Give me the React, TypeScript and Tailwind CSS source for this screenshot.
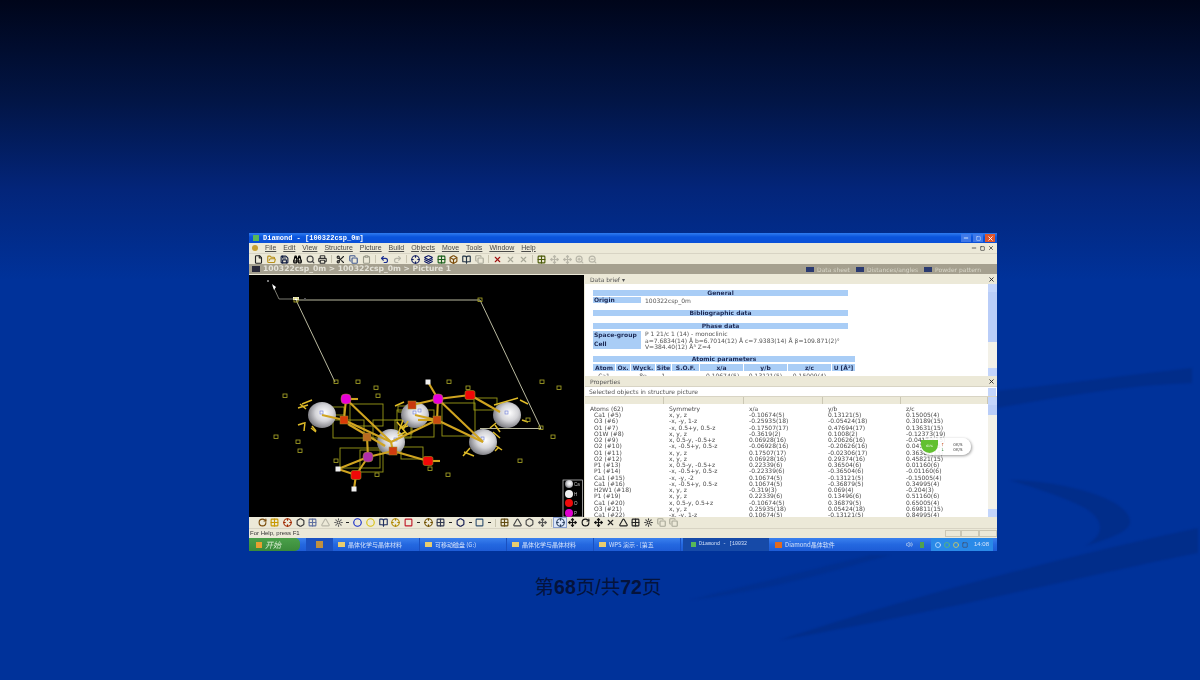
import {
  Binoculars, BookOpen, Box, Circle, Clipboard, Copy, Crosshair, File, FolderOpen, Grid2x2, Hexagon, Layers,
  Minus, Move, Printer, Redo2, RotateCw, Save, Scissors, Search, Square, Sun, Triangle, Undo2, Volume2, X, ZoomIn, ZoomOut,
} from 'lucide-react';

const rows = [
  ['Ca1 (#5)', 'x, y, z', '-0.10674(5)', '0.13121(5)', '0.15005(4)'],
  ['O3 (#6)', '-x, -y, 1-z', '-0.25935(18)', '-0.05424(18)', '0.30189(15)'],
  ['O1 (#7)', '-x, 0.5+y, 0.5-z', '-0.17507(17)', '0.47694(17)', '0.13631(15)'],
  ['O1W (#8)', 'x, y, z', '-0.3619(2)', '0.1008(2)', '-0.12373(19)'],
  ['O2 (#9)', 'x, 0.5-y, -0.5+z', '0.06928(16)', '0.20626(16)', '-0.04179(15)'],
  ['O2 (#10)', '-x, -0.5+y, 0.5-z', '-0.06928(16)', '-0.20626(16)', '0.04179(15)'],
  ['O1 (#11)', 'x, y, z', '0.17507(17)', '-0.02306(17)', '0.36369(15)'],
  ['O2 (#12)', 'x, y, z', '0.06928(16)', '0.29374(16)', '0.45821(15)'],
  ['P1 (#13)', 'x, 0.5-y, -0.5+z', '0.22339(6)', '0.36504(6)', '0.01160(6)'],
  ['P1 (#14)', '-x, -0.5+y, 0.5-z', '-0.22339(6)', '-0.36504(6)', '-0.01160(6)'],
  ['Ca1 (#15)', '-x, -y, -2', '0.10674(5)', '-0.13121(5)', '-0.15005(4)'],
  ['Ca1 (#16)', '-x, -0.5+y, 0.5-z', '0.10674(5)', '-0.36879(5)', '0.34995(4)'],
  ['H2W1 (#18)', 'x, y, z', '-0.319(3)', '0.069(4)', '-0.204(3)'],
  ['P1 (#19)', 'x, y, z', '0.22339(6)', '0.13496(6)', '0.51160(6)'],
  ['Ca1 (#20)', 'x, 0.5-y, 0.5+z', '-0.10674(5)', '0.36879(5)', '0.65005(4)'],
  ['O3 (#21)', 'x, y, z', '0.25935(18)', '0.05424(18)', '0.69811(15)'],
  ['Ca1 (#22)', '-x, -y, 1-z', '0.10674(5)', '-0.13121(5)', '0.84995(4)'],
];

const menus = ['File', 'Edit', 'View', 'Structure', 'Picture', 'Build', 'Objects', 'Move', 'Tools', 'Window', 'Help'];

const topTools = [
  [File, '#222222'], [FolderOpen, '#b89018'], [Save, '#101c40'], [Binoculars, '#000000'], [Search, '#444444'], [Printer, '#333333'], null,
  [Scissors, '#222222'], [Copy, '#40588e'], [Clipboard, '#9a9a8a'], null,
  [Undo2, '#1a2f90'], [Redo2, '#b8b6a8'], null,
  [Crosshair, '#101c60'], [Layers, '#000e60'], [Grid2x2, '#1a5e1a'], [Box, '#7a4a08'], [BookOpen, '#223344'], [Copy, '#a8a898'], null,
  [X, '#a01010'], [X, '#a8a898'], [X, '#a8a898'], null,
  [Grid2x2, '#4a5a08'], [Move, '#b8b6a8'], [Move, '#b8b6a8'], [ZoomIn, '#b8b6a8'], [ZoomOut, '#b8b6a8'],
] as const;

const bottomTools = [
  [RotateCw, '#7a4a08'], [Grid2x2, '#c89800'], [Crosshair, '#a02800'], [Hexagon, '#333333'], [Grid2x2, '#6070a0'], [Triangle, '#b8b6a8'], [Sun, '#555555'], 'dash',
  [Circle, '#1028c8'], [Circle, '#d8c010'], [BookOpen, '#203060'], [Crosshair, '#b08800'], [Square, '#c01828'], 'dash',
  [Crosshair, '#705000'], [Grid2x2, '#303850'], 'dash', [Hexagon, '#101850'], 'dash', [Square, '#305070'], 'dash', null,
  [Grid2x2, '#604a10'], [Triangle, '#444444'], [Hexagon, '#444444'], [Move, '#555555'], null,
  [Crosshair, '#2a4060', true], [Move, '#111111'], [RotateCw, '#111111'], [Move, '#111111'], [X, '#222222'], [Triangle, '#222222'], [Grid2x2, '#222222'], [Sun, '#333333'], [Copy, '#a8a898'], [Copy, '#a8a898'],
] as const;

const tasks = ['晶体化学与晶体材料', '可移动磁盘 (G:)', '晶体化学与晶体材料', 'WPS 演示 - [第五'];

const pale = 'font-["DejaVu_Sans","Noto_Sans_CJK_SC",sans-serif]';

const Tools = ({ items, narrow }: { items: readonly any[]; narrow?: boolean }) => (
  <div className="flex items-center">
    {items.map((item, i) => {
      if (item === null) return <div key={i} className="mx-[2px] h-[8px] w-px bg-[#c8c4b0]" />;
      if (item === 'dash') return <div key={i} className="mx-[2px] h-px w-[3px] bg-[#222222]" />;
      const [Icon, color, selected] = item;
      return (
        <div key={i} className={`flex ${narrow ? 'w-[12.65px]' : 'w-[12.9px]'} justify-center ${selected ? 'bg-[#dbe6f8] outline outline-[0.5px] outline-[#8aa0d0]' : ''}`}>
          <Icon size={9} color={color} strokeWidth={3} />
        </div>
      );
    })}
  </div>
);

const PaneHeader = ({ title, arrow }: { title: string; arrow?: boolean }) => (
  <div className="flex h-[9px] items-center justify-between bg-[#ece9d8] pl-[5px] pr-[2px] text-[6px] text-[#555555]">
    <span>{title}{arrow ? '  ▾' : ''}</span>
    <X size={7} color="#222222" strokeWidth={3} />
  </div>
);

const Scrollbar = ({ thumb }: { thumb: string }) => (
  <div className="flex w-[9px] shrink-0 flex-col bg-[#f3f1e8]">
    <div className="h-[8px] bg-[#c3d5fb]" />
    <div className={`${thumb} bg-[#b9cdf8]`} />
    <div className="flex-1" />
    <div className="h-[8px] bg-[#c3d5fb]" />
  </div>
);

const Bar = ({ children, wide }: { children: string; wide?: boolean }) => (
  <div className={`${wide ? 'w-[262px]' : 'w-[255px]'} h-[6px] bg-[#a9cdf6] text-center text-[6px] font-bold leading-[6px] text-[#1d2a55]`}>
    {children}
  </div>
);

const Crystal = () => {
  const spheres = [[322, 415], [415, 415], [507, 415], [391, 442], [483, 442]];
  const magenta = [[346, 399, '#e800d8'], [438, 399, '#e800d8'], [368, 457, '#b030a8']] as const;
  const red = [[470, 395], [428, 461], [356, 475]];
  const dimRed = [[344, 420, '#d83c08'], [437, 420, '#c84c10'], [367, 437, '#b86a20'], [393, 451, '#d03c10'], [412, 405, '#c83810']] as const;
  const white = [[428, 382], [338, 469], [354, 489]];
  const small = [[285, 396], [336, 382], [358, 382], [376, 388], [378, 396], [449, 382], [468, 388], [542, 382], [559, 388], [276, 437], [298, 442], [300, 451], [336, 461], [377, 475], [430, 469], [448, 475], [520, 461], [553, 437], [541, 428], [528, 420], [480, 300]];
  const frames = [[350, 404, 33, 22], [333, 420, 31, 18], [373, 420, 38, 18], [397, 410, 37, 27], [442, 403, 33, 33], [474, 398, 23, 12], [340, 448, 40, 20], [360, 450, 23, 22], [401, 447, 22, 12], [395, 420, 17, 14], [332, 407, 12, 8], [398, 406, 24, 6]];
  const bonds = [
    [346, 399, 391, 442], [344, 420, 391, 442], [348, 424, 385, 446], [322, 415, 344, 420], [346, 399, 344, 420], [391, 442, 437, 420],
    [438, 399, 437, 420], [415, 415, 437, 420], [438, 399, 483, 442], [437, 420, 483, 442], [438, 399, 470, 395], [470, 395, 500, 412],
    [391, 442, 393, 451], [393, 451, 428, 461], [368, 457, 393, 451], [368, 457, 338, 469], [338, 469, 356, 475], [356, 475, 368, 457],
    [356, 475, 354, 489], [428, 382, 438, 399], [367, 437, 368, 457], [412, 405, 438, 399], [428, 461, 440, 461], [346, 399, 358, 399], [418, 420, 437, 420],
  ];
  const ticks = [
    [308, 405, 298, 408], [306, 409, 300, 404], [312, 400, 302, 404], [305, 422, 304, 431], [311, 428, 316, 432], [316, 431, 312, 426], [304, 423, 298, 425],
    [395, 406, 404, 402], [406, 424, 400, 428], [494, 405, 518, 398], [520, 400, 528, 404], [522, 420, 528, 422], [495, 425, 500, 432], [496, 423, 490, 428],
    [470, 448, 463, 456], [464, 452, 474, 456], [496, 446, 502, 450], [493, 432, 500, 438], [499, 447, 495, 451],
    [400, 428, 408, 426], [405, 432, 398, 436], [408, 421, 403, 430], [397, 422, 407, 434], [403, 420, 398, 434],
  ];
  const marks = [[320, 411], [413, 411], [418, 409], [505, 411], [394, 438], [481, 437]];
  return (
    <svg viewBox="249 275 335 242" className="h-[242px] w-[335px] shrink-0 bg-black">
      <defs>
        <radialGradient id="ball" cx="0.58" cy="0.42" r="0.7">
          <stop offset="0" stopColor="#ffffff" />
          <stop offset="0.45" stopColor="#d4d4d8" />
          <stop offset="1" stopColor="#5c5c62" />
        </radialGradient>
      </defs>
      <path d="M296 300H480L541 428.5H480M296 300L335 382" fill="none" stroke="#e8e8c8" strokeWidth="0.8" />
      <path d="M273 286L279 299H296" fill="none" stroke="#b0b0a0" strokeWidth="0.7" />
      <path d="M272 284L276 287L274 290Z" fill="#ffffff" />
      <rect x="267" y="280" width="2" height="2" fill="#777777" />
      <rect x="293" y="297" width="6" height="3" fill="#ffffff" />
      <rect x="294" y="298" width="4" height="4" fill="none" stroke="#c0b830" strokeWidth="0.8" />
      <rect x="304" y="298" width="2" height="2" fill="#555555" />
      {frames.map(([x, y, w, h], i) => (
        <rect key={i} x={x} y={y} width={w} height={h} fill="none" stroke="#9a9a18" strokeWidth="0.9" />
      ))}
      {spheres.map(([x, y], i) => <ellipse key={i} cx={x} cy={y} rx={14} ry={13} fill="url(#ball)" />)}
      {marks.map(([x, y], i) => (
        <rect key={i} x={x} y={y} width={3} height={3} fill="none" stroke="#6878d8" strokeWidth="0.6" />
      ))}
      {bonds.map(([a, b, c, d], i) => (
        <line key={i} x1={a} y1={b} x2={c} y2={d} stroke="#d0a420" strokeWidth="2.1" />
      ))}
      {ticks.map(([a, b, c, d], i) => (
        <line key={i} x1={a} y1={b} x2={c} y2={d} stroke="#e0bc28" strokeWidth="1.5" />
      ))}
      {small.map(([x, y], i) => (
        <rect key={i} x={x - 2} y={y - 2} width={4} height={3.5} fill="none" stroke="#b0ac28" strokeWidth="0.8" />
      ))}
      {dimRed.map(([x, y, c], i) => <rect key={i} x={x - 4} y={y - 4} width={8} height={8} fill={c} stroke="#a09020" strokeWidth="0.5" />)}
      {magenta.map(([x, y, c], i) => <rect key={i} x={x - 5} y={y - 5} width={10} height={10} rx={4} fill={c} stroke="#a09020" strokeWidth="0.5" />)}
      {red.map(([x, y], i) => <rect key={i} x={x - 5} y={y - 4.5} width={10} height={9} rx={2} fill="#f00808" stroke="#a09020" strokeWidth="0.6" />)}
      {white.map(([x, y], i) => <rect key={i} x={x - 2.5} y={y - 2.5} width={5} height={5} fill="#f0f0f0" />)}
      <rect x="563" y="480" width="19.5" height="37" fill="#000000" stroke="#d8d8d8" strokeWidth="0.7" />
      <circle cx="569" cy="484" r="4" fill="url(#ball)" />
      <circle cx="569" cy="494" r="4" fill="#f0f0f0" />
      <circle cx="569" cy="503" r="4" fill="#ee0a0a" />
      <circle cx="569" cy="513" r="4" fill="#e000d0" />
      <text x="574" y="486" fontSize="4.5" fill="#c0c0c0" fontFamily="Liberation Sans">Ca</text>
      <text x="574" y="496" fontSize="4.5" fill="#c0c0c0" fontFamily="Liberation Sans">H</text>
      <text x="574" y="505" fontSize="4.5" fill="#c0c0c0" fontFamily="Liberation Sans">O</text>
      <text x="574" y="515" fontSize="4.5" fill="#c0c0c0" fontFamily="Liberation Sans">P</text>
    </svg>
  );
};

const DataBrief = () => (
  <div className="flex h-[92px] bg-white">
    <div className="flex-1 overflow-hidden pl-[8px] pt-[6px] text-[#555555]">
      <Bar>General</Bar>
      <div className="mt-[1px] flex h-[6px] items-center text-[6px]">
        <div className="h-full w-[48px] bg-[#a9cdf6] pl-[1px] font-bold leading-[6px] text-[#1d2a55]">Origin</div>
        <span className="ml-[4px]">100322csp_0m</span>
      </div>
      <div className="mt-[7px]"><Bar>Bibliographic data</Bar></div>
      <div className="mt-[7px]"><Bar>Phase data</Bar></div>
      <div className="mt-[2px] flex h-[18px] text-[6px] leading-[6.5px]">
        <div className="w-[48px] bg-[#a9cdf6] pl-[1px] pt-[1px] font-bold text-[#1d2a55]">
          <div>Space-group</div>
          <div className="mt-[2px]">Cell</div>
        </div>
        <div className="ml-[4px] whitespace-nowrap">
          P 1 21/c 1 (14) - monoclinic<br />
          a=7.6834(14) Å b=6.7014(12) Å c=7.9383(14) Å β=109.871(2)°<br />
          V=384.40(12) Å³ Z=4
        </div>
      </div>
      <div className="mt-[7px]"><Bar wide>Atomic parameters</Bar></div>
      <div className="mt-[2px] grid w-[262px] grid-cols-[22px_14px_24px_15px_27px_43px_43px_43px_23px] gap-x-px text-[6px] font-bold leading-[7px] text-[#1d2a55]">
        {['Atom', 'Ox.', 'Wyck.', 'Site', 'S.O.F.', 'x/a', 'y/b', 'z/c', 'U [Å²]'].map((h) => (
          <div key={h} className="overflow-hidden whitespace-nowrap bg-[#a9cdf6] text-center">{h}</div>
        ))}
      </div>
      <div className="mt-[2px] grid w-[262px] grid-cols-[22px_14px_24px_15px_27px_43px_43px_43px_23px] gap-x-px text-[6px] leading-[6px]">
        {['Ca1', '', '8e', '1', '', '-0.10674(5)', '0.13121(5)', '0.15009(4)', ''].map((c, i) => (
          <div key={i} className="whitespace-nowrap text-center">{c}</div>
        ))}
      </div>
    </div>
    <Scrollbar thumb="h-[50px]" />
  </div>
);

const Properties = () => (
  <>
    <PaneHeader title="Properties" />
    <div className="flex h-[11px] items-center justify-between border-y border-[#d8d4c4] bg-white pl-[4px] pr-[1px] text-[6px] text-[#555555]">
      Selected objects in structure picture
      <div className="h-[8px] w-[8px] bg-[#c3d5fb]" />
    </div>
    <div className="flex h-[120px]">
      <div className="relative flex-1 overflow-hidden bg-white">
        <div className="grid h-[7px] grid-cols-[79px_80px_79px_78px_1fr] bg-[#ece9d8]">
          {[0, 1, 2, 3, 4].map((i) => <div key={i} className="border-r border-[#cbc7b4]" />)}
        </div>
        <div className={`px-[5px] pt-[2px] text-[6px] leading-[6.24px] text-[#4a4a4a] ${pale}`}>
          <div className="grid grid-cols-[79px_80px_79px_78px_1fr]">
            {['Atoms (62)', 'Symmetry', 'x/a', 'y/b', 'z/c'].map((h) => <div key={h}>{h}</div>)}
          </div>
          {rows.map((r) => (
            <div key={r[0]} className="grid grid-cols-[79px_80px_79px_78px_1fr] whitespace-nowrap">
              {r.map((c, i) => <div key={i} className={i === 0 ? 'pl-[4px]' : ''}>{c}</div>)}
            </div>
          ))}
        </div>
        {/* net speed widget floating over the table */}
        <div className="absolute left-[336px] top-[41px] flex h-[17px] w-[50px] items-center rounded-full bg-white/90 shadow-[1px_1px_3px_#00000066]">
          <div className="flex h-[13px] w-[17px] items-center justify-center rounded-b-full bg-[#62c030] text-[3px] text-white">61%</div>
          <div className="ml-[3px] flex flex-col text-[4px] leading-[5px]">
            <span className="text-[#c04010]">↑</span>
            <span className="text-[#208030]">↓</span>
          </div>
          <div className="ml-[9px] flex flex-col text-[4px] leading-[5px] text-[#444444]">
            <span>0K/S</span>
            <span>0K/S</span>
          </div>
        </div>
      </div>
      <Scrollbar thumb="h-[10px]" />
    </div>
  </>
);

const Window = () => (
  <div className={`flex h-[318px] w-[748px] flex-col bg-[#ece9d8] blur-[0.35px] ${pale}`}>
    <div className="flex h-[10px] items-center justify-between bg-[linear-gradient(#2f7cf0,#0a54dc_40%,#0a50d8)] pl-[4px] pr-[2px]">
      <div className="flex items-center gap-[4px]">
        <span className="h-[6px] w-[6px] bg-[#58b858]" />
        <span className='font-["Liberation_Mono",monospace] text-[7px] font-bold leading-[10px] text-white'>Diamond - [100322csp_0m]</span>
      </div>
      <div className="flex items-center gap-[2px]">
        <div className="flex h-[8px] w-[10px] items-end justify-center bg-[#3f78e8] pb-[1px]"><Minus size={6} color="#ffffff" strokeWidth={3} /></div>
        <div className="flex h-[8px] w-[10px] items-center justify-center bg-[#3f78e8]"><Square size={5} color="#ffffff" strokeWidth={2} /></div>
        <div className="flex h-[8px] w-[10px] items-center justify-center bg-[#e0562c]"><X size={7} color="#ffffff" strokeWidth={3} /></div>
      </div>
    </div>
    <div className="flex h-[10px] items-center justify-between pl-[3px] pr-[3px] font-['Liberation_Sans',sans-serif] text-[7px] text-[#4a4a48]">
      <div className="flex items-center gap-[7px]">
        <span className="h-[6px] w-[6px] rounded-sm bg-[#c8a030]" />
        {menus.map((m) => <span key={m} className="underline decoration-[0.5px]">{m}</span>)}
      </div>
      <div className="flex items-center gap-[3px] text-[#333333]">
        <Minus size={6} strokeWidth={3} />
        <Square size={5} strokeWidth={3} />
        <X size={6} strokeWidth={3} />
      </div>
    </div>
    <div className="flex h-[11px] items-center border-t border-[#d8d4c4] pl-[3px]">
      <Tools items={topTools} />
    </div>
    <div className="flex h-[10px] items-center justify-between bg-[#a5a08f] pl-[3px] pr-[16px] text-[7.6px] font-bold text-[#e4e2d8]">
      <div className="flex items-center gap-[3px]">
        <span className="h-[6px] w-[8px] bg-[#2a2a3a]" />
        100322csp_0m &gt; 100322csp_0m &gt; Picture 1
      </div>
      <div className="flex items-center gap-[6px] text-[6px] font-normal text-[#d8d6c8]">
        <span className="flex items-center gap-[3px]"><span className="h-[5px] w-[8px] bg-[#2a3a70]" />Data sheet</span>
        <span className="flex items-center gap-[3px]"><span className="h-[5px] w-[8px] bg-[#2a3a70]" />Distances/angles</span>
        <span className="flex items-center gap-[3px]"><span className="h-[5px] w-[8px] bg-[#2a3a70]" />Powder pattern</span>
      </div>
    </div>
    <div className="mt-px flex h-[242px] overflow-hidden">
      <Crystal />
      <div className="ml-[1px] flex w-[412px] flex-col overflow-hidden">
        <PaneHeader title="Data brief" arrow />
        <DataBrief />
        <div className="h-px" />
        <Properties />
      </div>
    </div>
    <div className="flex h-[11px] items-center pl-[7px]">
      <Tools items={bottomTools} narrow />
    </div>
    <div className="flex h-[10px] items-center justify-between border-t border-[#d8d4c4] pl-[1px] font-['Liberation_Sans',sans-serif] text-[6px] text-[#333333]">
      For Help, press F1
      <div className="flex h-[7px]">
        <div className="w-[16px] border border-[#cbc7b4]" />
        <div className="w-[18px] border border-[#cbc7b4]" />
        <div className="w-[18px] border border-[#cbc7b4]" />
      </div>
    </div>
    <div className="flex h-[13px] items-center bg-[linear-gradient(#3a80ee,#2468e0_50%,#1d5cd6)] text-[6px] text-[#d4e2fa]">
      <div className='flex h-full w-[51px] items-center gap-[3px] rounded-r-[5px] bg-[linear-gradient(#4aa04a,#3a8a3a)] pl-[7px] font-["Noto_Sans_CJK_SC",sans-serif] text-[8px] italic text-[#d8ecd0]'>
        <span className="h-[6px] w-[6px] bg-[#e8a030]" />开始
      </div>
      <div className="ml-[6px] flex h-full w-[27px] items-center justify-center bg-[#1a50c0]">
        <span className="h-[7px] w-[7px] bg-[#c09040]" />
      </div>
      {tasks.map((t) => (
        <div key={t} className="flex h-full w-[87px] items-center gap-[3px] border-r border-[#1a50c0] pl-[5px] font-['Noto_Sans_CJK_SC',sans-serif]">
          <span className="h-[5px] w-[7px] bg-[#e8cc70]" />
          <span className="whitespace-nowrap">{t}</span>
        </div>
      ))}
      <div className="ml-[2px] flex h-full w-[86px] items-center gap-[3px] bg-[#164aa8] pl-[8px]">
        <span className="h-[5px] w-[5px] bg-[#58b858]" />
        <span className="whitespace-nowrap font-['Liberation_Mono',monospace] text-[5px]">Diamond - [10032</span>
      </div>
      <div className="ml-[2px] flex h-full w-[85px] items-center gap-[3px] pl-[4px] font-['Noto_Sans_CJK_SC',sans-serif]">
        <span className="h-[6px] w-[7px] bg-[#e06a20]" />
        <span className="whitespace-nowrap">Diamond晶体软件</span>
      </div>
      <div className="ml-auto flex h-full w-[100px] items-center justify-end gap-[3px] pr-[4px]">
        <Volume2 size={7} color="#e0e8f0" />
        <span className="mx-[4px] h-[6px] w-[4px] bg-[#50a050]" />
        <div className="flex h-full w-[62px] items-center gap-[3px] bg-[#2a8ae8] pl-[4px]">
          <Circle size={6} color="#d0e8ff" strokeWidth={3} />
          <Circle size={6} color="#60c060" strokeWidth={3} />
          <Circle size={6} color="#e0d050" strokeWidth={3} />
          <Square size={6} color="#405070" strokeWidth={3} />
          <span className="ml-[3px] font-['Liberation_Sans',sans-serif]">14:08</span>
        </div>
      </div>
    </div>
  </div>
);

const App = () => (
  <div className="relative h-[680px] w-[1200px] overflow-hidden bg-[linear-gradient(#00051a_0px,#021545_100px,#03257a_190px,#00329a_280px,#00329a_680px)]">
    {/* faint swooshes of the slide template, darker than the ground */}
    <svg className="absolute inset-0 blur-[1px]" width="1200" height="680" viewBox="0 0 1200 680">
      <path d="M997 391C1070 383 1130 375 1192 368V383C1130 385 1070 395 997 408Z" fill="#012d8a" />
      <path d="M1010 480C1070 482 1130 500 1130 522C1130 532 1105 540 1085 546C1105 535 1105 520 1085 508C1065 497 1035 488 1010 480Z" fill="#012d8a" />
      <path d="M1198 528V553C1100 572 950 610 780 640C900 600 1050 560 1198 528Z" fill="#012d8a" />
      <path d="M690 600C750 585 810 570 870 555H890C820 575 760 592 690 600Z" fill="#012f90" />
    </svg>
    <div className="relative flex h-full flex-col pl-[249px] pt-[233px]">
      <Window />
      <div className="mt-[25px] w-[698px] text-center font-['Liberation_Sans','Noto_Sans_CJK_SC',sans-serif] text-[19.5px] leading-[22px] text-[#05133c]">
        第<span className="font-bold">68</span>页/共<span className="font-bold">72</span>页
      </div>
    </div>
  </div>
);

export default App;
